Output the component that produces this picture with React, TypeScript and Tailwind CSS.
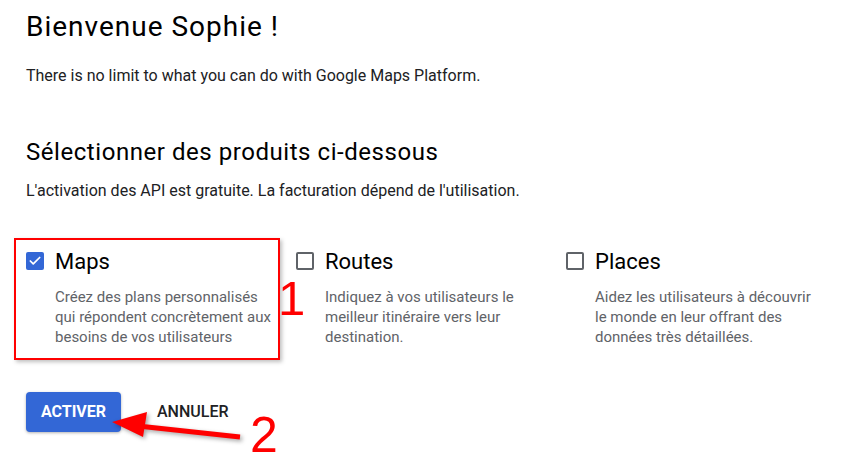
import { Check } from "lucide-react"

const products = [
  {
    name: "Maps",
    checked: true,
    desc: "Créez des plans personnalisés qui répondent concrètement aux besoins de vos utilisateurs",
  },
  {
    name: "Routes",
    checked: false,
    desc: "Indiquez à vos utilisateurs le meilleur itinéraire vers leur destination.",
  },
  {
    name: "Places",
    checked: false,
    desc: "Aidez les utilisateurs à découvrir le monde en leur offrant des données très détaillées.",
  },
]

function Checkbox({ checked }: { checked: boolean }) {
  if (checked) {
    return (
      <div className="w-[18px] h-[18px] rounded-[2px] bg-[#3367d6] flex items-center justify-center shrink-0">
        <Check className="w-[14px] h-[14px] text-white" strokeWidth={3} />
      </div>
    )
  }
  return <div className="w-[18px] h-[18px] rounded-[2px] border-2 border-[#5f6368] shrink-0" />
}

export default function App() {
  return (
    <div
      className="relative w-[849px] h-[463px] bg-white overflow-hidden text-[#202124]"
      style={{ fontFamily: "Roboto, 'Liberation Sans', sans-serif" }}
    >
      <div className="pl-[26px] pt-[9px]">
        <h1 className="text-[28px] leading-[36px] tracking-[1px] text-black">Bienvenue Sophie !</h1>
        <p className="mt-[21px] text-[16px] leading-[20px]">
          There is no limit to what you can do with Google Maps Platform.
        </p>

        <h2 className="mt-[50px] text-[24px] leading-[32px] tracking-[0.55px] text-black">
          Sélectionner des produits ci-dessous
        </h2>
        <p className="mt-[13px] text-[16px] leading-[20px]">
          L'activation des API est gratuite. La facturation dépend de l'utilisation.
        </p>

        <div className="mt-[47px] grid grid-cols-[270px_270px_270px]">
          {products.map((p) => (
            <div key={p.name} className="flex gap-[11px]">
              <div className="pt-[4px]">
                <Checkbox checked={p.checked} />
              </div>
              <div>
                <div className="text-[22px] leading-[28px] text-black">{p.name}</div>
                <p className="mt-[11px] w-[222px] text-[15px] leading-[20px] text-[#5f6368]">
                  {p.desc}
                </p>
              </div>
            </div>
          ))}
        </div>

        <div className="mt-[45px] flex items-center">
          <button className="h-[40px] w-[95px] rounded-[4px] bg-[#3367d6] text-white text-[16px] font-bold shadow-[0_1px_3px_rgba(0,0,0,0.3)]">
            ACTIVER
          </button>
          <button className="ml-[36px] text-[16px] font-medium text-[#202124]">ANNULER</button>
        </div>
      </div>

      {/* annotations */}
      <div className="absolute left-[14px] top-[238px] w-[266px] h-[122px] border-2 border-[#ff0000] shadow-[2px_2px_4px_rgba(0,0,0,0.25)]" />
      <div
        className="absolute left-[278px] top-[274px] text-[49px] leading-none text-[#ff0000]"
        style={{ fontFamily: "'Liberation Sans', Arial, sans-serif" }}
      >
        1
      </div>
      <div
        className="absolute left-[250px] top-[410px] text-[50px] leading-none text-[#ff0000]"
        style={{ fontFamily: "'Liberation Sans', Arial, sans-serif" }}
      >
        2
      </div>
      <svg
        className="absolute left-0 top-0"
        width="849"
        height="463"
        style={{ filter: "drop-shadow(2px 2px 2px rgba(0,0,0,0.35))" }}
      >
        <line x1="138" y1="426" x2="240" y2="437" stroke="#ff0000" strokeWidth="5" />
        <polygon points="112,422 147,412 143,437" fill="#ff0000" />
      </svg>
    </div>
  )
}
